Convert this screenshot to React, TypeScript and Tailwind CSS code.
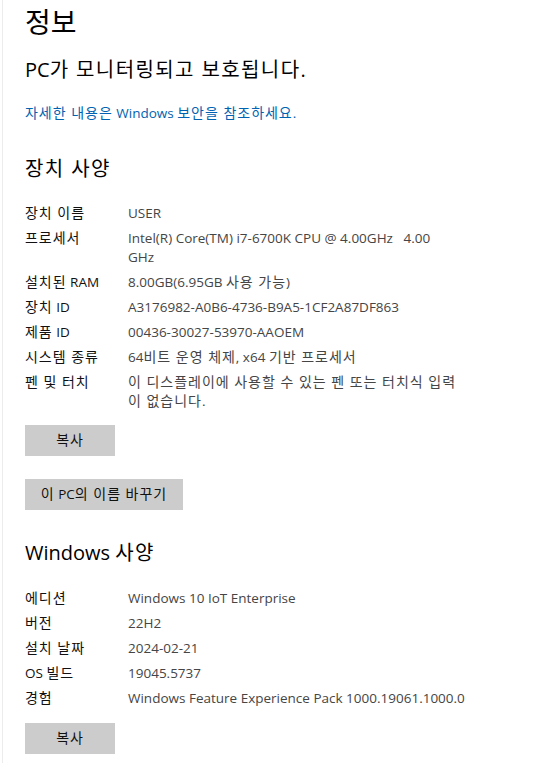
import React from "react";

type Row = { label: string; value: string[] };

const deviceRows: Row[] = [
	{ label: "장치 이름", value: ["USER"] },
	{ label: "프로세서", value: ["Intel(R) Core(TM) i7-6700K CPU @ 4.00GHz   4.00", "GHz"] },
	{ label: "설치된 RAM", value: ["8.00GB(6.95GB 사용 가능)"] },
	{ label: "장치 ID", value: ["A3176982-A0B6-4736-B9A5-1CF2A87DF863"] },
	{ label: "제품 ID", value: ["00436-30027-53970-AAOEM"] },
	{ label: "시스템 종류", value: ["64비트 운영 체제, x64 기반 프로세서"] },
	{ label: "펜 및 터치", value: ["이 디스플레이에 사용할 수 있는 펜 또는 터치식 입력", "이 없습니다."] },
];

const windowsRows: Row[] = [
	{ label: "에디션", value: ["Windows 10 IoT Enterprise"] },
	{ label: "버전", value: ["22H2"] },
	{ label: "설치 날짜", value: ["2024-02-21"] },
	{ label: "OS 빌드", value: ["19045.5737"] },
	{ label: "경험", value: ["Windows Feature Experience Pack 1000.19061.1000.0"] },
];

// hangul runs get a little more room, like Malgun Gothic
const HANGUL = /([\uAC00-\uD7A3]+(?:\s+[\uAC00-\uD7A3]+)*)/;
const BODY_K = "text-[14px] leading-[0px] tracking-[0.07em]";

function Txt({ text, k }: { text: string; k: string }) {
	const parts = text.split(HANGUL);
	return (
		<span>
			{parts.map((p, i) =>
				i % 2 === 1 ? (
					<span key={i} className={k}>
						{p}
					</span>
				) : (
					<React.Fragment key={i}>{p}</React.Fragment>
				)
			)}
		</span>
	);
}

function SpecList({ rows }: { rows: Row[] }) {
	return (
		<div className="flex flex-col gap-[6px]">
			{rows.map((row) => (
				<div key={row.label} className="flex text-[13.5px] leading-[19px]">
					<div className="w-[103px] shrink-0 whitespace-pre text-[#111]">
						<Txt text={row.label} k={BODY_K} />
					</div>
					<div className="text-[#454545] whitespace-pre">
						{row.value.map((line, i) => (
							<div key={i} className="h-[19px]">
								<Txt text={line} k={BODY_K} />
							</div>
						))}
					</div>
				</div>
			))}
		</div>
	);
}

function GrayButton({ label, className }: { label: string; className?: string }) {
	return (
		<button
			className={
				"h-[31px] bg-[#cccccc] text-[13.5px] leading-[19px] text-[#111] flex items-center justify-center " +
				(className ?? "")
			}
		>
			<Txt text={label} k={BODY_K} />
		</button>
	);
}

export default function App() {
	const hk = "leading-[0px] tracking-[0.07em]";
	return (
		<div
			className="w-[534px] h-[763px] bg-white overflow-hidden"
			style={{ fontFamily: '"Open Sans", "Noto Sans CJK KR", sans-serif' }}
		>
			<div className="ml-[2px] h-full border-l border-[#ececec] pl-[22px] pt-[4px]">
				<h1 className="text-[28px] leading-[36px] text-black">정보</h1>
				<p className="mt-[16px] text-[20px] leading-[28px] text-black">
					<Txt text="PC가 모니터링되고 보호됩니다." k={hk} />
				</p>
				<a className="block mt-[19px] text-[13.5px] leading-[20px] text-[#0063b1]">
					<Txt text="자세한 내용은 Windows 보안을 참조하세요." k={BODY_K} />
				</a>

				<h2 className="mt-[32px] text-[20px] leading-[28px] text-black">
					<Txt text="장치 사양" k={hk} />
				</h2>
				<div className="mt-[21px]">
					<SpecList rows={deviceRows} />
				</div>
				<GrayButton label="복사" className="mt-[14px] w-[90px]" />
				<GrayButton label="이 PC의 이름 바꾸기" className="mt-[23px] w-[158px]" />

				<h2 className="mt-[29px] text-[20px] leading-[28px] text-black">
					<Txt text="Windows 사양" k={hk} />
				</h2>
				<div className="mt-[22px]">
					<SpecList rows={windowsRows} />
				</div>
				<GrayButton label="복사" className="mt-[15px] w-[90px]" />
			</div>
		</div>
	);
}
